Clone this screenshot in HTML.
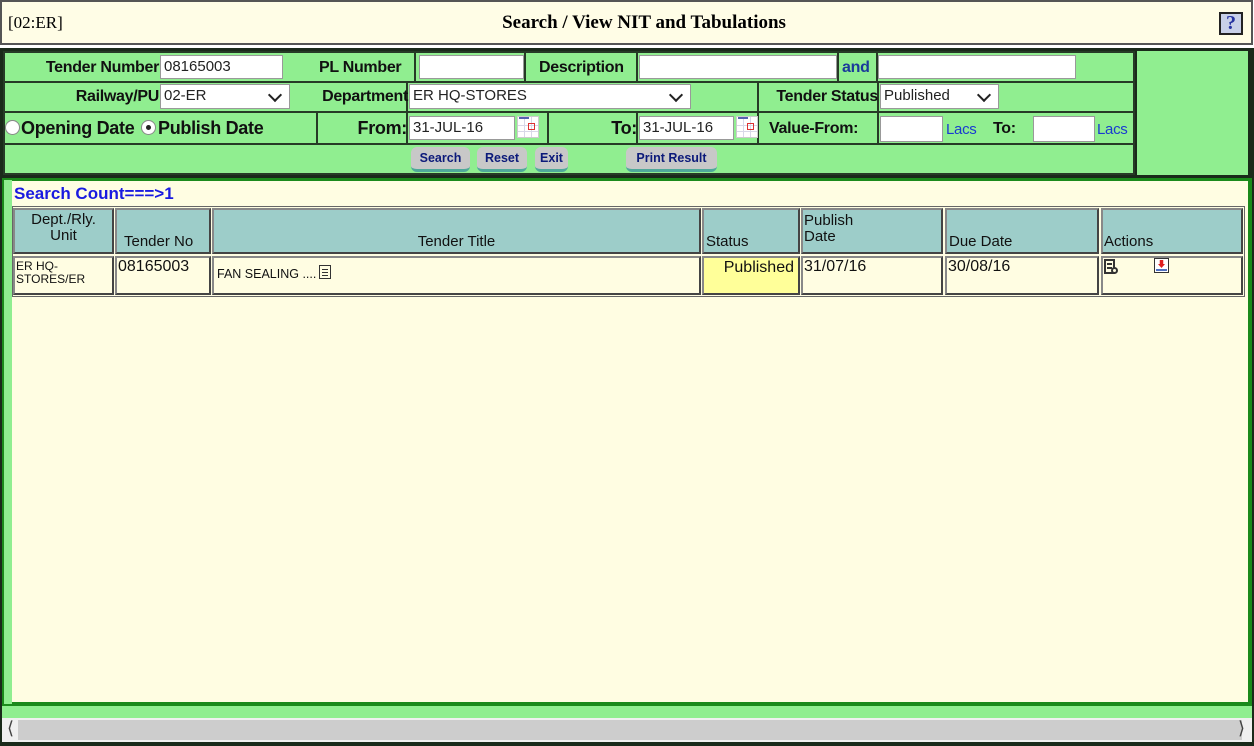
<!DOCTYPE html>
<html><head><meta charset="utf-8">
<style>
*{box-sizing:border-box;margin:0;padding:0}
body{width:1254px;height:746px;background:#fff;position:relative;overflow:hidden;font-family:"Liberation Sans",Arial,sans-serif}
.a{position:absolute}
.lbl{position:absolute;font-weight:bold;font-size:16px;color:#111;white-space:nowrap;line-height:20px;letter-spacing:-0.3px}
.r{text-align:right}
.cell{position:absolute;background:#90ee90;border:2px solid #263a26}
.inp{position:absolute;background:#fff;border:1px solid #999;font-size:15px;line-height:22px;padding-left:3px;color:#222;height:24px}
.sel::after{content:"";position:absolute;right:9px;top:5px;width:8px;height:8px;border-right:2px solid #222;border-bottom:2px solid #222;transform:rotate(45deg)}
.btn{position:absolute;top:147px;height:25px;background:#c8c8c8;border-radius:6px;border-bottom:3px solid #4fa89a;color:#0c1a7a;font-weight:bold;font-size:12.5px;line-height:23px;text-align:center}
.cal{position:absolute;width:22px;height:22px;background:#fff;border:1px solid #ccc;background-image:linear-gradient(90deg,transparent 6px,#d8d8e8 6px,#d8d8e8 7px,transparent 7px,transparent 13px,#d8d8e8 13px,#d8d8e8 14px,transparent 14px),linear-gradient(transparent 8px,#d8d8e8 8px,#d8d8e8 9px,transparent 9px,transparent 14px,#d8d8e8 14px,#d8d8e8 15px,transparent 15px)}
.cal::before{content:"";position:absolute;left:1px;top:0;width:10px;height:2px;background:#5560b0}
.cal::after{content:"";position:absolute;right:3px;top:6px;width:5px;height:5px;border:1px solid #d33}
.th,.td{position:absolute;border:2px solid;border-color:#888 #444 #444 #888;font-size:15px;color:#111}
.th{background:#9dcdc9;top:208px;height:46px}
.td{background:#fffde2;top:256px;height:39px}
</style></head><body>
<div class="a" style="left:0;top:0;width:1253px;height:45px;background:#fffde6;border:2px solid #555"></div>
<div class="a" style="left:8px;top:13px;font-family:'Liberation Serif',serif;font-size:17px">[02:ER]</div>
<div class="a" style="left:0;width:1254px;top:12px;text-align:center;font-family:'Liberation Serif',serif;font-weight:bold;font-size:19px;padding-left:34px">Search / View NIT and Tabulations</div>
<div class="a" style="left:1219px;top:12px;width:24px;height:23px;border:2px solid #222;background:#c8d0e8;color:#2633a0;font-family:'Liberation Serif',serif;font-weight:bold;font-size:20px;text-align:center;line-height:19px">?</div>

<div class="a" style="left:0;top:48px;width:1254px;height:130px;background:#1a2a1a"></div>
<div class="a" style="left:1137px;top:51px;width:111px;height:124px;background:#90ee90"></div>
<div class="a" style="left:3px;top:51px;width:1132px;height:124px;background:#90ee90"></div>
<div class="cell" style="left:3px;top:51px;width:315px;height:32px"></div>
<div class="cell" style="left:316px;top:51px;width:210px;height:32px"></div>
<div class="cell" style="left:524px;top:51px;width:315px;height:32px"></div>
<div class="cell" style="left:837px;top:51px;width:41px;height:32px"></div>
<div class="cell" style="left:876px;top:51px;width:259px;height:32px"></div>
<div class="cell" style="left:3px;top:81px;width:315px;height:32px"></div>
<div class="cell" style="left:316px;top:81px;width:443px;height:32px"></div>
<div class="cell" style="left:757px;top:81px;width:378px;height:32px"></div>
<div class="cell" style="left:3px;top:111px;width:315px;height:34px"></div>
<div class="cell" style="left:316px;top:111px;width:233px;height:34px"></div>
<div class="cell" style="left:547px;top:111px;width:212px;height:34px"></div>
<div class="cell" style="left:757px;top:111px;width:378px;height:34px"></div>
<div class="cell" style="left:3px;top:143px;width:1132px;height:32px"></div>
<div class="cell" style="left:316px;top:51px;width:100px;height:32px;border-width:2px 2px 2px 0"></div>
<div class="cell" style="left:524px;top:51px;width:114px;height:32px"></div>
<div class="cell" style="left:316px;top:81px;width:92px;height:32px;border-width:2px 2px 2px 0"></div>
<div class="cell" style="left:757px;top:81px;width:122px;height:32px"></div>
<div class="cell" style="left:316px;top:111px;width:92px;height:34px"></div>
<div class="cell" style="left:547px;top:111px;width:91px;height:34px"></div>
<div class="cell" style="left:757px;top:111px;width:122px;height:34px"></div>

<div class="lbl r" style="left:5px;width:154px;top:58px">Tender Number</div>
<div class="inp" style="left:160px;top:55px;width:123px">08165003</div>
<div class="lbl" style="left:319px;top:58px">PL Number</div>
<div class="inp" style="left:419px;top:55px;width:105px"></div>
<div class="lbl" style="left:539px;top:58px">Description</div>
<div class="inp" style="left:639px;top:55px;width:198px"></div>
<div class="lbl" style="left:842px;top:58px;color:#1a3a9a">and</div>
<div class="inp" style="left:878px;top:55px;width:198px"></div>

<div class="lbl r" style="left:5px;width:154px;top:87px">Railway/PU</div>
<div class="inp sel" style="left:160px;top:84px;width:130px;height:25px">02-ER</div>
<div class="lbl r" style="left:318px;width:90px;top:87px">Department</div>
<div class="inp sel" style="left:409px;top:84px;width:282px;height:25px">ER HQ-STORES</div>
<div class="lbl r" style="left:759px;width:119px;top:87px">Tender Status</div>
<div class="inp sel" style="left:880px;top:84px;width:119px;height:25px">Published</div>

<div class="a" style="left:5px;top:120px;width:15px;height:15px;border:1px solid #888;border-radius:50%;background:#fff"></div>
<div class="lbl" style="left:21px;top:118px;font-size:18px">Opening Date</div>
<div class="a" style="left:141px;top:120px;width:15px;height:15px;border:1px solid #888;border-radius:50%;background:#fff"><div class="a" style="left:4px;top:4px;width:5px;height:5px;border-radius:50%;background:#222"></div></div>
<div class="lbl" style="left:158px;top:118px;font-size:18px">Publish Date</div>
<div class="lbl r" style="left:318px;width:89px;top:118px;font-size:18px">From:</div>
<div class="inp" style="left:409px;top:116px;width:106px">31-JUL-16</div>
<div class="cal" style="left:517px;top:116px"></div>
<div class="lbl r" style="left:549px;width:88px;top:118px;font-size:18px">To:</div>
<div class="inp" style="left:639px;top:116px;width:95px">31-JUL-16</div>
<div class="cal" style="left:736px;top:116px"></div>
<div class="lbl" style="left:769px;top:119px">Value-From:</div>
<div class="inp" style="left:880px;top:116px;width:63px;height:26px"></div>
<div class="lbl" style="left:946px;top:120px;color:#1a3ad0;font-weight:normal;font-size:15px">Lacs</div>
<div class="lbl" style="left:993px;top:119px">To:</div>
<div class="inp" style="left:1033px;top:116px;width:62px;height:26px"></div>
<div class="lbl" style="left:1097px;top:120px;color:#1a3ad0;font-weight:normal;font-size:15px">Lacs</div>

<div class="btn" style="left:411px;width:59px">Search</div>
<div class="btn" style="left:477px;width:50px">Reset</div>
<div class="btn" style="left:535px;width:33px">Exit</div>
<div class="btn" style="left:626px;width:91px">Print Result</div>

<div class="a" style="left:0;top:176px;width:1254px;height:570px;background:#1a2a1a"></div>
<div class="a" style="left:2px;top:178px;width:1250px;height:528px;background:#1b8a1b"></div>
<div class="a" style="left:4px;top:180px;width:8px;height:524px;background:#90ee90"></div>
<div class="a" style="left:12px;top:181px;width:1236px;height:521px;background:#fffde2"></div>
<div class="a" style="left:14px;top:184px;font-weight:bold;font-size:17px;color:#1a1ae0">Search Count===&gt;1</div>
<div class="a" style="left:12px;top:206px;width:1233px;height:91px;border:1px solid #666"></div>

<div class="th" style="left:13px;width:101px;text-align:center;line-height:16px;padding-top:2px">Dept./Rly.<br>Unit</div>
<div class="th" style="left:115px;width:96px;padding:23px 0 0 7px">Tender No</div>
<div class="th" style="left:212px;width:489px;text-align:center;padding-top:23px">Tender Title</div>
<div class="th" style="left:702px;width:98px;padding:23px 0 0 2px">Status</div>
<div class="th" style="left:801px;width:142px;line-height:16px;padding:3px 0 0 1px">Publish<br>Date</div>
<div class="th" style="left:945px;width:154px;padding:23px 0 0 2px">Due Date</div>
<div class="th" style="left:1101px;width:142px;padding:23px 0 0 1px">Actions</div>

<div class="td" style="left:13px;width:101px;font-size:12px;line-height:13px;padding:2px 0 0 1px">ER HQ-<br>STORES/ER</div>
<div class="td" style="left:115px;width:96px;padding:0 0 0 1px;font-size:16px">08165003</div>
<div class="td" style="left:212px;width:489px;font-size:12.5px;padding:7px 0 0 3px">FAN SEALING ....<span style="display:inline-block;width:12px;height:14px;border:1px solid #333;margin-left:3px;vertical-align:-1px;background:linear-gradient(#333,#333) 2px 3px/6px 1px no-repeat,linear-gradient(#333,#333) 2px 6px/6px 1px no-repeat,linear-gradient(#333,#333) 2px 9px/6px 1px no-repeat"></span></div>
<div class="td" style="left:702px;width:98px;background:#ffff99;text-align:right;padding:1px 4px 0 0;font-size:16px">Published</div>
<div class="td" style="left:801px;width:142px;padding:0 0 0 1px;font-size:16px">31/07/16</div>
<div class="td" style="left:945px;width:154px;padding:0 0 0 1px;font-size:16px">30/08/16</div>
<div class="td" style="left:1101px;width:142px"></div>
<div class="a" style="left:1104px;top:259px;width:11px;height:15px;border:2px solid #333;background:linear-gradient(#333,#333) 1px 2px/5px 2px no-repeat,linear-gradient(#333,#333) 1px 6px/5px 2px no-repeat"></div>
<div class="a" style="left:1111px;top:267px;width:7px;height:7px;border:2px solid #333;border-radius:50%;background:#fffde2"></div>
<div class="a" style="left:1154px;top:258px;width:15px;height:15px;border:1px solid #333;background:#fff"><div class="a" style="left:3px;top:1px;width:7px;height:8px;background:#e02020;clip-path:polygon(25% 0,75% 0,75% 50%,100% 50%,50% 100%,0 50%,25% 50%)"></div><div class="a" style="left:1px;top:10px;width:11px;height:2px;background:#5070c0"></div></div>

<div class="a" style="left:2px;top:706px;width:1250px;height:12px;background:#90ee90"></div>
<div class="a" style="left:2px;top:718px;width:1250px;height:24px;background:#f0f0f0"></div>
<div class="a" style="left:18px;top:720px;width:1224px;height:20px;background:#cdcdcd"></div>
<div class="a" style="left:7px;top:718px;font-size:18px;color:#444">&#x27E8;</div>
<div class="a" style="left:1238px;top:718px;font-size:18px;color:#444">&#x27E9;</div>
</body></html>
